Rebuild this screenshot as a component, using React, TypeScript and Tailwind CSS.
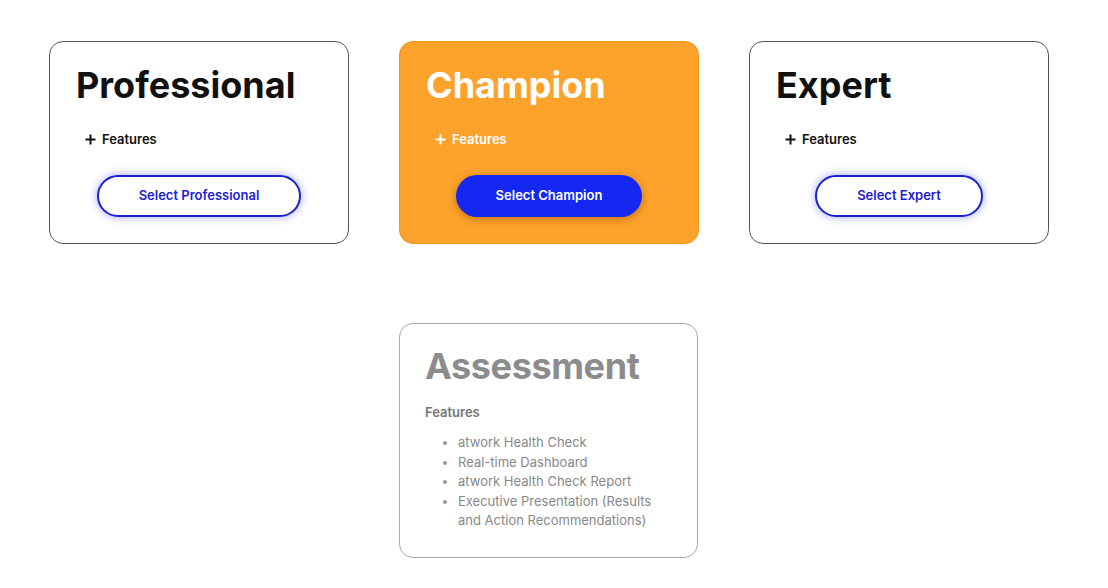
const plans = [
  { name: "Professional", featured: false },
  { name: "Champion", featured: true },
  { name: "Expert", featured: false },
];

const assessmentFeatures = [
  "atwork Health Check",
  "Real-time Dashboard",
  "atwork Health Check Report",
  "Executive Presentation (Results and Action Recommendations)",
];

const PlusIcon = () => (
  <svg width="11" height="11" viewBox="0 0 11 11" className="shrink-0">
    <path d="M5.5 0.5v10M0.5 5.5h10" stroke="currentColor" strokeWidth="2" />
  </svg>
);

const PlanCard = ({ name, featured }: { name: string; featured: boolean }) => (
  <div
    className={`w-[300px] h-[203px] rounded-[14px] border px-[26px] pt-[21px] flex flex-col ${
      featured ? "bg-[#fda22b] border-[#f09618] text-white" : "bg-white border-[#555] text-[#111]"
    }`}
  >
    <h2 className="text-[36px] leading-[44px] font-bold tracking-[0px]">{name}</h2>
    <div className="flex items-center gap-[6px] pl-[9px] mt-[22px] text-[13px] leading-[20px] font-semibold">
      <PlusIcon />
      <span>Features</span>
    </div>
    <div className="flex justify-center mt-[26px]">
      <button
        className={`h-[42px] px-[40px] rounded-full text-[13px] font-semibold ${
          featured
            ? "bg-[#1428f2] text-white shadow-[0_2px_8px_rgba(120,60,0,0.45)]"
            : "bg-white text-[#1a22d0] border-2 border-[#1a22d0] shadow-[0_0_8px_rgba(40,50,255,0.45)]"
        }`}
      >
        Select {name}
      </button>
    </div>
  </div>
);

export default function App() {
  return (
    <div className="min-h-screen bg-white pl-[49px] pt-[41px] font-['Inter',sans-serif]">
      <div className="flex gap-[50px]">
        {plans.map((p) => (
          <PlanCard key={p.name} name={p.name} featured={p.featured} />
        ))}
      </div>
      <div className="flex mt-[79px] pl-[350px]">
        <div className="w-[299px] rounded-[14px] border border-[#aaa] px-[25px] pt-[20px] pb-[26px] text-[#888]">
          <h2 className="text-[36px] leading-[44px] font-bold tracking-[-0.4px] text-[#8c8c8c]">Assessment</h2>
          <p className="mt-[14px] text-[13px] leading-[20px] font-semibold text-[#777]">Features</p>
          <ul className="mt-[11px] pl-[33px] list-disc text-[13px] leading-[19.5px] text-[#888] marker:text-[#999]">
            {assessmentFeatures.map((f) => (
              <li key={f} className="pr-[8px]">{f}</li>
            ))}
          </ul>
        </div>
      </div>
    </div>
  );
}
